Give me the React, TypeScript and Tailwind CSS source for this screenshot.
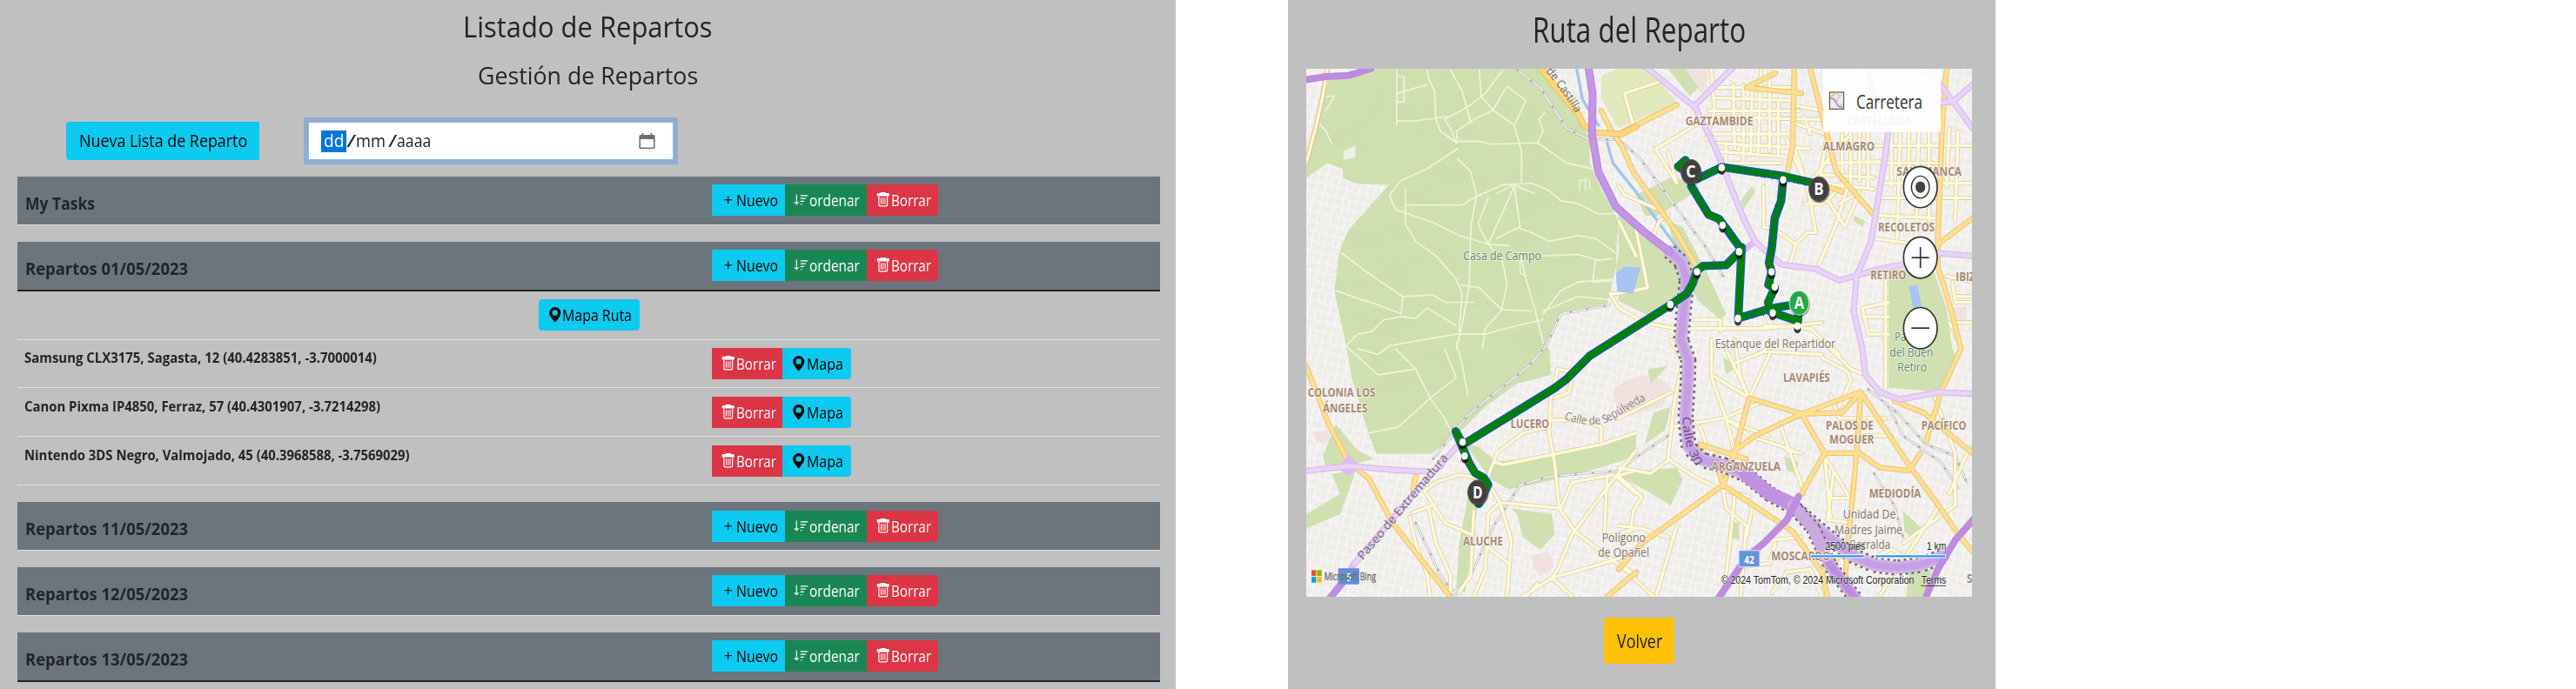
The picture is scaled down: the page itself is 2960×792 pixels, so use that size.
import React, { useLayoutEffect, useRef, useState } from "react";
import { BsGeoAltFill, BsPlus, BsSortDown } from "react-icons/bs";

/** Single line of text condensed or widened to a given width. */
function Fit({ w, children }: { w: number; children: string }) {
  const ref = useRef<HTMLSpanElement>(null);
  const [scale, setScale] = useState(1);
  useLayoutEffect(() => {
    if (ref.current) setScale(w / ref.current.offsetWidth);
  }, [w]);
  return (
    <span className="inline-block text-left" style={{ width: w }}>
      <span ref={ref} className="inline-block origin-left whitespace-nowrap" style={{ transform: `scaleX(${scale})` }}>
        {children}
      </span>
    </span>
  );
}

function TrashIcon() {
  return (
    <svg viewBox="0 0 16 16" className="size-[17.5px] shrink-0" fill="currentColor">
      <path d="M6 0h4a1 1 0 0 1 1 1h2.5a1 1 0 0 1 1 1v1.4a.6.6 0 0 1-.6.6H2.1a.6.6 0 0 1-.6-.6V2a1 1 0 0 1 1-1H5a1 1 0 0 1 1-1z" />
      <path d="M3 4v9.2a1.8 1.8 0 0 0 1.8 1.8h6.4a1.8 1.8 0 0 0 1.8-1.8V4h-1.1v9.1a.9.9 0 0 1-.9.9H5a.9.9 0 0 1-.9-.9V4z" />
      <path d="M5.4 5.6h.95v7H5.4zM7.5 5.6h.95v7H7.5zM9.6 5.6h.95v7H9.6z" />
    </svg>
  );
}

const smallBtn = "flex h-9 items-center pl-[10px] text-[17.5px] leading-[26px]";

function ListButtons() {
  return (
    <div className="flex">
      <button className={`${smallBtn} w-[84px] bg-[#0dcaf0] text-black`}>
        <BsPlus className="size-[17.5px] shrink-0" />
        <Fit w={48}>Nuevo</Fit>
      </button>
      <button className={`${smallBtn} w-[94px] bg-[#198754] text-white`}>
        <BsSortDown className="size-[17.5px] shrink-0" />
        <Fit w={58}>ordenar</Fit>
      </button>
      <button className={`${smallBtn} w-[82px] rounded-r bg-[#dc3545] text-white`}>
        <TrashIcon />
        <Fit w={46}>Borrar</Fit>
      </button>
    </div>
  );
}

function ListHeader({ name, w, open, offset }: { name: string; w: number; open?: boolean; offset?: boolean }) {
  return (
    <div
      className={`flex items-start bg-[#6c757d] ${
        open ? "h-[57px] border-b-2 border-[#212529]" : "h-14 border-b border-[#dee2e6]"
      }`}
    >
      <h4 className="w-[798px] pt-[19px] pl-[9px] text-[19.5px] leading-6 font-bold">
        <Fit w={w}>{name}</Fit>
      </h4>
      <div className={offset ? "pt-[10px]" : "pt-[9px]"}>
        <ListButtons />
      </div>
    </div>
  );
}

const deliveries = [
  { name: "Samsung CLX3175, Sagasta, 12 (40.4283851, -3.7000014)", w: 405, cls: "h-[55px] pt-[9px]" },
  { name: "Canon Pixma IP4850, Ferraz, 57 (40.4301907, -3.7214298)", w: 409, cls: "h-14 pt-[10px]" },
  { name: "Nintendo 3DS Negro, Valmojado, 45 (40.3968588, -3.7569029)", w: 443, cls: "h-14 pt-[10px]" },
];

function DeliveryRow({ name, w, cls }: { name: string; w: number; cls: string }) {
  return (
    <div className={`flex items-start border-b border-[#dee2e6] ${cls}`}>
      <div className="w-[798px] pt-px pl-[8px] text-[16px] leading-5 font-bold">
        <Fit w={w}>{name}</Fit>
      </div>
      <button className={`${smallBtn} w-[81px] bg-[#dc3545] text-white`}>
        <TrashIcon />
        <Fit w={46}>Borrar</Fit>
      </button>
      <button className={`${smallBtn} w-[79px] rounded-r bg-[#0dcaf0] text-black`}>
        <BsGeoAltFill className="size-[17.5px] shrink-0" />
        <Fit w={42}>Mapa</Fit>
      </button>
    </div>
  );
}

function CalendarIcon() {
  return (
    <svg viewBox="0 0 19 18" className="h-[18px] w-[19px]">
      <path d="M2 2h15a1.6 1.6 0 0 1 1.6 1.6v12.8A1.6 1.6 0 0 1 17 18H2a1.6 1.6 0 0 1-1.600-1.600V3.600A1.600 1.600 0 0 1 2 2zM2 7v9.600h15V7z" fill="#6d6f71" fillRule="evenodd" />
      <path d="M3.600 0h1.800v3H3.600zM13.600 0h1.800v3h-1.800z" fill="#6d6f71" />
    </svg>
  );
}

function ListPanel() {
  return (
    <section className="h-[792px] w-[1351px] shrink-0 bg-[#c0c0c0] pt-[11px] pr-[18px] pl-5">
      <h1 className="h-10 pr-[2px] text-center text-[33px] leading-10">
        <Fit w={287}>Listado de Repartos</Fit>
      </h1>
      <h3 className="mt-[18px] h-[34px] pr-[2px] text-center text-[28px] leading-[34px]">
        <Fit w={253}>Gestión de Repartos</Fit>
      </h3>
      <div className="mt-[37px] flex h-11 pl-14 text-[20px] leading-[30px]">
        <button className="w-[222px] rounded-l bg-[#0dcaf0] pl-[15px] text-left text-black">
          <Fit w={193}>Nueva Lista de Reparto</Fit>
        </button>
        <div className="ml-14 flex w-[420px] items-center border border-[#86b7fe] bg-white pl-[14px] ring-[5px] ring-[#0d6efd]/25">
          <span className="flex h-[25px] w-[29px] items-center justify-center bg-[#0078d7] text-white">
            <Fit w={23}>dd</Fit>
          </span>
          <Fit w={11}>/</Fit>
          <Fit w={34}>mm</Fit>
          <span className="w-[3px]" />
          <Fit w={10}>/</Fit>
          <Fit w={39}>aaaa</Fit>
          <span className="mr-5 ml-auto pb-px">
            <CalendarIcon />
          </span>
        </div>
      </div>
      <div className="mt-[19px] flex flex-col gap-[19px]">
        <ListHeader name="My Tasks" w={80} />
        <div>
          <ListHeader name="Repartos 01/05/2023" w={187} open />
          <div className="flex h-14 justify-center border-b border-[#dee2e6] pt-[9px]">
            <button className={`${smallBtn} w-[116px] rounded bg-[#0dcaf0] text-black`}>
              <BsGeoAltFill className="size-[17.5px] shrink-0" />
              <Fit w={80}>Mapa Ruta</Fit>
            </button>
          </div>
          {deliveries.map((d) => (
            <DeliveryRow key={d.name} {...d} />
          ))}
        </div>
        <ListHeader name="Repartos 11/05/2023" w={187} offset />
        <ListHeader name="Repartos 12/05/2023" w={187} />
        <ListHeader name="Repartos 13/05/2023" w={187} open />
      </div>
    </section>
  );
}

const greens = [
  "M345 235L270 262L200 270L160 440L123 560V612L195 560L248 580L250 612Q300 640 340 632L408 635L340 710L270 790Q240 850 235 880L220 1000L262 1200L280 1300L340 1500L365 1562H555L640 1500L740 1400L850 1320L968 1290L960 1200L945 1190L1000 1075L1160 1045L1190 920L1200 870V760L1140 650L1100 560V480L1060 390L940 235Z",
  "M1260 670L1380 610L1460 620L1480 650L1330 745L1290 740Z",
  "M1370 235H1430L1475 300L1445 330Z",
  "M1370 760L1420 780L1500 930L1570 1080L1550 1100L1470 1030L1400 880Z",
  "M1200 730L1290 820L1370 860L1450 940V1020L1370 1060L1300 1085L1200 1035L1190 900Z",
  "M2130 930L2280 915L2330 1060L2350 1200L2370 1240L2310 1350L2130 1335L2130 1190Z",
  "M1200 1640L1290 1620L1400 1610L1420 1650L1380 1740L1280 1680Z",
  "M2180 1760L2245 1820L2215 1850L2185 1830Z",
  "M2200 1970L2280 1960L2255 2060H2190Z",
  "M1560 1230L1610 1260L1570 1290Z",
  "M1300 1270L1370 1260L1310 1320Z",
  "M1320 1420L1380 1400L1360 1480L1290 1530Z",
  "M1200 1510L1260 1490L1200 1590Z",
  "M1580 1800H1615V1860L1580 1850Z",
  "M225 1460L300 1550L355 1580L310 1592L190 1610L180 1570Z",
  "M123 1770L240 1700L210 1630L270 1625L290 1632L240 1770L123 1820Z",
  "M660 1520L720 1540L780 1590L1000 1560L1260 1490V1570L1120 1615L900 1670L820 1685L760 1650L700 1570Z",
  "M830 1750L970 1770L980 1840L930 1892L870 1850L850 1770Z",
  "M680 1710L650 1870L640 2030L670 2040L700 1850L715 1730Z",
  "M1620 690L1660 640L1670 660L1630 720Z",
  "M2010 740L2050 760L2040 780L2010 760Z",
  "M2240 240L2290 235L2240 270Z",
  "M1770 1570L1820 1590L1810 1630L1780 1620Z",
];

const parkPaths = [
  "M435 235V430M435 262H460V350H435M435 320L540 290M435 415H500L610 400M540 240L545 270L565 310L570 410L585 450L640 490L620 440L600 410L690 360L740 320L800 240",
  "M620 240L660 310L690 420M720 240L725 330L770 380L840 430L865 520V625M840 430L880 345L815 295L765 380L700 410L640 450L645 490M650 485H720L760 495L920 490L1020 560L1110 580",
  "M920 490L940 450L925 410L945 385M645 510L540 580L450 620L410 670L430 720L560 765L650 810L750 840L820 845",
  "M645 545L690 590L710 670L690 780L685 980L660 1120L640 1200M465 650V770L500 830L570 880L640 960L660 1010L650 1140",
  "M465 705H660L700 680L800 635L900 630L960 655L1000 690L1060 700L1130 735L1190 735M840 640L750 840L715 770L750 680M840 640L860 780L780 820M860 785L900 800L960 830L1060 810L1120 820L1190 870",
  "M750 840L800 900L815 980L795 1070L740 1130L730 1200M860 870L880 960L910 1060L940 1180M940 880L1060 875L1130 895L1180 890M1120 895L1110 970L1180 965",
  "M245 870L330 935L455 1020L560 1015L600 1040L700 1040M655 980L720 990L795 1065L900 1070M225 1000L310 1030L360 1045L450 1080L455 1025M455 1090L500 1095L540 1060L640 1120M450 1090L390 1100L350 1140L300 1150L260 1190",
  "M300 1200L370 1220L410 1190L520 1170L640 1150L740 1150L810 1130L940 1100M260 1190L370 1290L500 1270L550 1370L440 1470L340 1490M550 1370L640 1300L600 1200M550 1370L600 1440L630 1500M500 1270L430 1200M680 1360L660 1250L640 1180",
  "M940 1080L1000 1000L1060 970L1180 960M940 1070L1060 1020L1160 1030M165 420L190 450L210 490M190 330H220L190 380",
];

const cream = [
  "M1370 735L1220 670L1200 640M1220 320L1340 280M1220 320L1250 430L1200 460M1330 510L1480 420M1325 510L1400 630L1370 520",
  "M1540 300H1810M1530 335L1800 345M1510 380H1820M1500 400L1900 410M1530 460H1800M1520 490L1860 510M1540 520L1800 540M1520 240L1530 380L1500 480",
  "M1595 290L1600 510M1630 290V560M1660 290L1655 530M1690 240L1680 530M1720 240V520M1750 350V530M1780 480L1830 600L1860 640M1840 400L1860 460M1570 500V560L1760 560",
  "M1800 360L1900 380L2000 350M1800 420L1910 460M1700 640V780L1740 790L1810 840L1850 800L1880 800L1850 640L1800 490M1850 640L1920 550L2000 460M1810 840L1790 910",
  "M1970 460V640M2000 450V640M2030 450V620M2060 440V640M1900 510L2100 500M1900 560L2100 555M1900 600L2080 610M1900 630L2080 650",
  "M2140 450V640M2170 460L2160 820M2200 450V620M2235 440L2225 820M2270 450V760M2340 440L2330 640M2370 450L2360 760M2100 500H2420M2100 560H2300M2100 630H2420M2090 680H2420M2080 740L2300 750M2080 820L2300 850",
  "M1920 450L1890 640L1980 780L2030 660L1960 700M1990 640L1950 770L1890 910M1840 700L1900 700L1950 660",
  "M1260 790L1300 990L1200 1010L1170 1010M1170 1010L1200 1060L1290 1110L1440 1140M1200 760L1260 880M1320 810L1340 760L1370 740",
  "M1440 1130H1700L1900 1110M1460 1100H1550V1140M1700 1120L1860 1130L1960 1220M2040 1060L2130 1040M2040 1090L2130 1090M2040 1060L2060 1150L2130 1150M2120 950V1340",
  "M2330 950L2420 970M2360 1020H2420M2350 970L2360 1040L2420 1040M2380 1190L2340 1110L2420 1110",
  "M1200 1440L1280 1400L1380 1350M1380 1170L1420 1240L1390 1400L1370 1580L1460 1640L1560 1690M1200 1610L1310 1630L1370 1585M1380 1470L1560 1440L1680 1390M1520 1170V1290L1650 1370M1560 1180L1650 1370M1520 1300L1570 1440L1600 1560M1600 1170L1620 1300L1650 1370",
  "M1600 1250L1700 1210L1900 1220M1700 1210L1720 1180M1650 1370L1720 1220M1570 1440L1650 1500L1800 1550M1560 1440L1660 1480L1720 1500M1760 1470L1840 1700M1780 1550L1830 1560M1840 1430L1800 1440",
  "M1900 1170L2000 1270L2050 1290M1900 1230L1990 1280L2000 1310L1960 1400M1930 1360L1960 1440L2050 1440M1910 1570L1930 1780M1910 1570L2000 1720M1930 1715H2005M1940 1630L1920 1790L2000 1800M2010 1500L2140 1500M2060 1440H2120",
  "M1480 1470L1500 1520L1460 1570M1560 1690L1570 1750L1640 1810L1620 2055M1600 1700L1580 1900L1560 2055M1640 1720L1660 1750L1640 1850M1570 1690L1650 1710M1400 1810L1330 2050M1200 1940L1320 2055M1630 1910L1720 1860L1830 1850M1640 1950L1720 1940L1740 1870",
  "M1730 2040L1780 1970L1860 1960M1860 1960L1900 2050M2100 2050L2300 1750M2020 1950L2140 1890L2200 1930M2180 1870L2360 1740M2360 1740V1560L2290 1370M2410 1540L2340 1700M1200 1810L1280 1820L1370 1850M1240 1830L1250 1760L1280 1710L1200 1640",
  "M990 1270L965 1380L960 1490L980 1600L995 1750L1050 1830L1180 1930L1260 1980M965 1445L1080 1450L1140 1470L1140 1520M990 1270L1040 1280L1030 1350L980 1370M1260 1490L1140 1530L800 1600L770 1590M960 1470L870 1490L780 1560L750 1640",
  "M1260 1550L1190 1640L1040 1840L990 1960L970 1990L870 2055M970 1990L1180 1930L1260 1900M1190 1640L1260 1620M1190 1640L1260 1700M790 1730L1000 1750L1040 1660L1180 1635M790 1730L750 1660L690 1640L650 1635L570 1660L530 1690",
  "M790 1730L830 1860L815 2055M785 1735L750 1770L745 1880L740 1960L700 2055M700 1760L690 1980L650 2040M530 1690L600 1800L690 1840M545 1750L570 1870L620 1980V2040M480 1780L500 1870L540 1980L550 2055M490 1765L570 1735M745 1880L820 1940M970 1990L1040 2055M1160 1640L1150 1850L1260 1820M920 2010L880 2055",
];

const yellow = [
  "M1200 460L1400 360",
  "M1640 300L1740 250M1640 300L1830 320M1805 235L1800 500L1780 600M1860 235L1900 390L1950 590L2080 740",
  "M2330 235L2315 440L2300 820L2300 920L2330 1010L2380 1200L2310 1350L2260 1520",
  "M2300 840L2420 750M1890 630L1970 660",
  "M1650 1370L1600 1560L1560 1670M1650 1370L1830 1425L2030 1350M1830 1425L1670 1500L1590 1560M1830 1425L1910 1560L1830 1700",
  "M2035 1350L2200 1600L2310 1750L2370 1840M2035 1350L2020 1560L1990 1880L1980 2000M2035 1350L1970 1420L1830 1425",
  "M1910 1560H2030L2100 1610L2200 1620L2240 1560M2150 1380L2250 1420L2420 1560M1490 1570L1480 1530L1640 1580M1530 1570L1560 1670L1280 1870L1200 1960",
  "M1560 1670L1800 1830L1900 1970L1920 2055M1900 1970L1990 1890",
  "M123 1260L200 1460L270 1590L340 1650L420 1800L620 2055M1260 1970L1160 2055M500 1640L490 1690",
  "M1140 380L1170 440L1210 500L1250 590L1400 800L1470 920",
  "M2370 1840L2420 1900",
];

const railways = "M1200 480L1270 540L1500 850L1560 950M2060 1340L2160 1420L2260 1530L2360 1570L2400 1660M2130 1400L2180 1500L2310 1590L2370 1680M2080 1630L2150 1740L2180 1850M500 1800L590 1990L640 2050M620 2050L680 2000L770 1810L860 1670L960 1640L1200 1620L1280 1560L1370 1500M850 240L930 300L1020 440L1090 475L1200 480M560 1580L680 1430L740 1380L890 1260L950 1190L1000 1080L1170 1050";

const m30a = "M1095 225L1110 320L1108 460L1130 590L1190 710L1290 800L1375 865";
const m30b = "M1375 865L1415 900L1435 960L1425 1060L1415 1170L1440 1240L1438 1320L1430 1440L1442 1540L1490 1585L1560 1600L1640 1635L1720 1700L1800 1745L1900 1830L2000 1910L2080 1945L2160 1955L2240 1945L2320 1915";
const route = "M718 1735L750 1668L735 1645L705 1628L685 1595L668 1555L638 1485L664 1530L980 1335L1020 1305L1100 1225L1378 1049L1435 1010L1455 975L1470 930L1490 915L1570 912L1612 870L1624 850L1612 1095L1720 1062L1820 1045L1818 1105L1722 1072L1715 1040L1738 990L1716 980L1727 935L1718 905L1728 850L1738 750L1760 690L1767 612";
const route2 = "M1885 632L1767 605L1555 574L1470 615L1405 572L1430 550M1450 640L1510 738L1545 752L1570 785L1624 860";
const hatchA = "M1560 574L1885 634M1475 612L1550 575M1765 650L1738 750L1718 905M1640 1090L1800 1048M1450 640L1505 730M1490 915L1570 912M1570 785L1618 850";

const stops = [
  [1555, 576], [1767, 618], [1558, 775], [1615, 866], [1470, 935], [1378, 1048], [1611, 1096],
  [1731, 1077], [1727, 935], [1738, 987], [1816, 1122], [662, 1522], [669, 1570],
];

const pins = [
  { t: "A", x: 1822, y: 1042, c: "#22ab4b" },
  { t: "B", x: 1890, y: 650, c: "#404040" },
  { t: "C", x: 1449, y: 590, c: "#404040" },
  { t: "D", x: 714, y: 1695, c: "#404040" },
];

const districts: [string, number, number, number][] = [
  ["GAZTAMBIDE", 1430, 430, 233], ["CASTELLANA", 1987, 430, 222], ["ALMAGRO", 1904, 518, 178],
  ["SALAMANCA", 2158, 603, 224], ["RECOLETOS", 2094, 795, 195], ["RETIRO", 2068, 961, 123],
  ["IBIZA", 2362, 968, 90], ["COLONIA LOS", 128, 1366, 233], ["ÁNGELES", 180, 1418, 154],
  ["LUCERO", 827, 1473, 134], ["ALUCHE", 664, 1878, 137], ["LAVAPIÉS", 1767, 1314, 161],
  ["PALOS DE", 1914, 1480, 164], ["MOGUER", 1926, 1528, 154], ["PACÍFICO", 2243, 1480, 155],
  ["ARGANZUELA", 1520, 1620, 238], ["MEDIODÍA", 2063, 1713, 179], ["MOSCARDÓ", 1726, 1930, 204],
  ["SAN DIEGO", 2400, 2006, 190],
];

const places: [string, number, number, number, string][] = [
  ["Casa de Campo", 664, 895, 269, "#5d8566"],
  ["Estanque del Repartidor", 1532, 1197, 415, "#84746c"],
  ["Parque", 2152, 1174, 110, "#5d8566"],
  ["del Buen", 2134, 1226, 150, "#5d8566"],
  ["Retiro", 2161, 1278, 101, "#5d8566"],
  ["Unidad De", 1973, 1786, 182, "#84746c"],
  ["Madres Jaime", 1944, 1838, 234, "#84746c"],
  ["Garralda", 1993, 1890, 144, "#84746c"],
  ["Polígono", 1142, 1867, 151, "#84746c"],
  ["de Opañel", 1129, 1918, 176, "#84746c"],
];

function RouteMap() {
  const all = (list: string[]) => list.join("");
  return (
    <svg viewBox="123 235 2295 1820" preserveAspectRatio="none" className="block h-[607px] w-[765px]" fontFamily="'Open Sans', 'Noto Sans', sans-serif">
      <defs>
        <pattern id="blocks" width="74" height="66" patternUnits="userSpaceOnUse" patternTransform="rotate(14)">
          <path d="M0 8H74M0 40H40L74 48M12 0V66M38 0L44 66M62 8V48" stroke="#fff" strokeWidth="3" fill="none" opacity=".75" />
        </pattern>
        <filter id="relief" x="0" y="0" width="1" height="1">
          <feTurbulence type="fractalNoise" baseFrequency="0.006 0.014" numOctaves="3" seed="8" />
          <feColorMatrix values="0 0 0 0 .55  0 0 0 0 .65  0 0 0 0 .4  1.6 0 0 0 -.72" />
        </filter>
        <clipPath id="casa"><path d={greens[0]} /></clipPath>
        <path id="paseo" d="M318 1930L640 1545" />
        <path id="castilla" d="M948 244Q1020 330 1056 398" />
        <path id="calle30" d="M1420 1434Q1422 1540 1470 1610" />
        <path id="sepulveda" d="M1012 1443Q1100 1475 1165 1452Q1230 1410 1298 1376" />
      </defs>
      <rect x="123" y="235" width="2295" height="1820" fill="#f0eeeb" />
      <rect x="123" y="235" width="2295" height="1820" fill="url(#blocks)" />
      <path d="M1180 1340Q1300 1250 1380 1330L1350 1400L1200 1440ZM1430 235H1510L1500 330L1450 290ZM900 1910L960 1900L980 1950L930 1985L905 1950ZM145 1490L200 1480L205 1520L160 1525ZM2350 1060L2400 1050L2395 1120L2360 1120Z" fill="#f2dcd9" opacity=".75" />
      <path d="M1200 235H1300L1400 350L1320 390L1220 430L1200 440L1140 340V260Z" fill="#e2e9bd" />
      <path d={all(greens)} fill="#d0e0b0" />
      <g clipPath="url(#casa)">
        <rect x="123" y="235" width="1100" height="1400" filter="url(#relief)" opacity=".35" />
      </g>
      <path d="M250 518L292 500V540L252 550Z" fill="#f0eeeb" />
      <g fill="none" strokeLinejoin="round" strokeLinecap="round">
        <path d={all(parkPaths)} stroke="#eff5da" strokeWidth="5" />
        <path d="M1065 655V620H1100V650M1085 655V610M780 665L840 635L910 665M850 640L880 655M860 870V940L880 950" stroke="#eff5da" strokeWidth="4" />
        <path d="M1160 490L1180 560L1260 660L1400 850L1440 900M1055 235L1075 340L1130 430" stroke="#a5c5ea" strokeWidth="10" />
        <path d={railways} stroke="#bab8bb" strokeWidth="9" />
        <path d={railways} stroke="#f2f1f2" strokeWidth="5" />
        <path d={railways} stroke="#aaa8ac" strokeWidth="5" strokeDasharray="4 55" />
        <path d={all(cream)} stroke="#dccfa5" strokeWidth="15" />
        <path d={all(cream)} stroke="#fff9da" strokeWidth="10" />
        <path d={all(yellow)} stroke="#e9c083" strokeWidth="19" />
        <path d={all(yellow)} stroke="#fee08d" strokeWidth="13" />
        <path d="M195 235L180 330L155 440L123 560" stroke="#dfba80" strokeWidth="17" />
        <path d="M195 235L180 330L155 440L123 560" stroke="#fff5cf" strokeWidth="11" />
        <path d="M925 225L1000 320L1060 390L1080 430L1120 455L1210 460L1260 435" stroke="#e9b966" strokeWidth="22" />
        <path d="M925 225L1000 320L1060 390L1080 430L1120 455L1210 460L1260 435" stroke="#ffd77a" strokeWidth="17" />
        <g stroke="#dcbcf1" strokeWidth="22">
          <path d="M1295 230L1465 370L1530 500L1630 750L1670 830L1760 910L1880 925L1960 965L2030 945L2100 925L2180 910M1465 360L1600 225M1670 830L1620 870" />
          <path d="M2130 450L2115 560L2070 830L2020 950L2010 1070L2040 1200L2050 1290L2100 1350L2170 1375L2300 1350L2420 1355M2060 240L2100 440" />
          <path d="M2270 240L2350 345L2420 440M2310 350H2350L2420 290M2300 870L2420 880" />
          <path d="M110 1622L270 1605L430 1618L560 1625L590 1600M640 1540L520 1670L290 1940L200 2065M270 1580L245 1610L270 1625L300 1608Z" />
        </g>
        <g stroke="#e8d4f7" strokeWidth="14">
          <path d="M1295 230L1465 370L1530 500L1630 750L1670 830L1760 910L1880 925L1960 965L2030 945L2100 925L2180 910M1465 360L1600 225" />
          <path d="M2130 450L2115 560L2070 830L2020 950L2010 1070L2040 1200L2050 1290L2100 1350L2170 1375L2300 1350L2420 1355" />
          <path d="M2270 240L2350 345L2420 440M2310 350H2350L2420 290M2300 870L2420 880" />
          <path d="M110 1622L270 1605L430 1618L560 1625M640 1540L520 1670L290 1940" />
        </g>
        <path d={m30b} stroke="#73637f" strokeWidth="56" strokeLinecap="butt" strokeDasharray="9 12" />
        <path d={m30b} stroke="#cdb6dc" strokeWidth="42" />
        <path d={m30b} stroke="#c79ee6" strokeWidth="24" />
        <path d="M1640 1635L1720 1700L1800 1735" stroke="#bf93df" strokeWidth="48" />
        <path d={m30a} stroke="#b184d2" strokeWidth="27" />
        <path d={m30a} stroke="#c594e6" strokeWidth="21" />
        <path d="M1800 1740L1870 1820L1930 1950L2020 2065" stroke="#73637f" strokeWidth="52" strokeLinecap="butt" strokeDasharray="9 12" />
        <path d="M1800 1740L1870 1820L1930 1950L2020 2065" stroke="#c9a9e0" strokeWidth="40" />
        <g stroke="#bd8ce0" strokeWidth="24">
          <path d="M110 275L190 262L270 258L345 235M1540 2065L1640 1920L1700 1870L1780 1790L1820 1710M1925 1940L2020 2065M2255 2065L2300 1960L2360 1860L2430 1780M250 2005L200 2065" />
        </g>
      </g>
      <path d="M1190 940L1220 917L1275 920L1250 1010L1195 1003ZM2200 985L2230 980L2245 1060H2215Z" fill="#a6c4f4" />

      <g fontWeight="700" fontSize="43" fill="#a88a75" stroke="#f7f4f0" strokeWidth="5" paintOrder="stroke">
        {districts.map(([t, x, y, w]) => (
          <text key={t} x={x} y={y} textLength={w} lengthAdjust="spacingAndGlyphs">{t}</text>
        ))}
      </g>
      <g fontSize="44" stroke="#f5f4ee" strokeWidth="5" paintOrder="stroke">
        {places.map(([t, x, y, w, c]) => (
          <text key={t} x={x} y={y} fill={c} textLength={w} lengthAdjust="spacingAndGlyphs">{t}</text>
        ))}
      </g>
      <g fontSize="40" fill="#75696e">
        <text fontSize="41" textLength="460" lengthAdjust="spacingAndGlyphs"><textPath href="#paseo">Paseo de Extremadura</textPath></text>
        <text textLength="178" lengthAdjust="spacingAndGlyphs"><textPath href="#castilla">de Castilla</textPath></text>
        <text textLength="180" lengthAdjust="spacingAndGlyphs" fill="#6b4b86"><textPath href="#calle30">Calle 30</textPath></text>
        <text textLength="306" lengthAdjust="spacingAndGlyphs" fill="#8b8480"><textPath href="#sepulveda">Calle de Sepúlveda</textPath></text>
      </g>

      <g fill="none" strokeLinejoin="round" strokeLinecap="round">
        <path d={route + route2} stroke="#1c56d6" strokeWidth="29" />
        <path d={route + route2} stroke="#008000" strokeWidth="22" />
        <path d={hatchA} stroke="#1450b0" strokeWidth="24" strokeLinecap="butt" strokeDasharray="2.500 17 2.500 9 2.500 24" />
      </g>
      {stops.map(([x, y]) => (
        <g key={`${x}-${y}`}>
          <ellipse cx={x} cy={y + 10} rx="12" ry="15" fill="#000" opacity=".75" />
          <ellipse cx={x} cy={y} rx="11" ry="13" fill="#fff" />
        </g>
      ))}
      {pins.map((p) => (
        <g key={p.t}>
          <ellipse cx={p.x + 2} cy={p.y + 5} rx="36" ry="43" fill="#000" opacity=".35" />
          <ellipse cx={p.x} cy={p.y} rx="34" ry="42" fill={p.c} stroke={p.t === "A" ? "#d9f0df" : "#585858"} strokeWidth="3" />
          <text x={p.x - 17} y={p.y + 20} fontSize="56" fontWeight="700" fill="#fff" textLength="34" lengthAdjust="spacingAndGlyphs">{p.t}</text>
        </g>
      ))}

      <rect x="1905" y="235" width="405" height="218" fill="#fff" opacity=".91" />
      <rect x="1927" y="316" width="49" height="58" fill="#ece9e6" stroke="#3c3c3c" strokeWidth="3" />
      <path d="M1950 318L1935 330M1955 374L1975 350M1950 350L1960 330L1975 322M1960 330L1950 318" stroke="#c9c5c0" strokeWidth="3" fill="none" />
      <path d="M1929 333Q1938 328 1946 318" stroke="#f6be60" strokeWidth="5" fill="none" />
      <path d="M1929 337Q1945 337 1950 352T1975 369" stroke="#b98ad8" strokeWidth="6" fill="none" />
      <text x="2019" y="372" fontSize="65" fill="#333" textLength="228" lengthAdjust="spacingAndGlyphs">Carretera</text>

      <g fill="#fff" stroke="#333" strokeWidth="5">
        <ellipse cx="2240" cy="643" rx="58" ry="71" />
        <ellipse cx="2240" cy="886" rx="58" ry="71" />
        <ellipse cx="2240" cy="1129" rx="58" ry="71" />
        <ellipse cx="2240" cy="643" rx="31" ry="38" strokeWidth="4" />
        <path d="M2210 886H2270M2240 850V922M2209 1129H2271" />
      </g>
      <ellipse cx="2240" cy="643" rx="17" ry="20" fill="#444" />

      <rect x="233" y="1957" width="73" height="55" rx="4" fill="#638fd8" />
      <text x="261" y="2001" fontSize="38" fontWeight="700" fill="#fff" textLength="17" lengthAdjust="spacingAndGlyphs">5</text>
      <rect x="1614" y="1895" width="72" height="57" rx="3" fill="#6693dc" stroke="#dce8fa" strokeWidth="3" />
      <text x="1633" y="1941" fontSize="38" fontWeight="700" fill="#fff" textLength="34" lengthAdjust="spacingAndGlyphs">42</text>
      <path d="M141 1963H157V1983H141Z" fill="#f25022" />
      <path d="M160 1963H176V1983H160Z" fill="#7fba00" />
      <path d="M141 1986H157V2006H141Z" fill="#00a4ef" />
      <path d="M160 1986H176V2006H160Z" fill="#ffb900" />
      <text x="185" y="1998" fontSize="36" fill="#6b6b6b" stroke="#6b6b6b" textLength="178" lengthAdjust="spacingAndGlyphs">Microsoft Bing</text>

      <g fontFamily="'Liberation Sans', Arial, sans-serif" fontSize="36" fill="#222">
        <g stroke="#fff" strokeWidth="3" strokeOpacity=".7" paintOrder="stroke">
          <text x="1912" y="1893" textLength="138" lengthAdjust="spacingAndGlyphs">2500 pies</text>
          <text x="2262" y="1893" textLength="67" lengthAdjust="spacingAndGlyphs">1 km</text>
          <text x="1553" y="2011" textLength="665" lengthAdjust="spacingAndGlyphs">© 2024 TomTom, © 2024 Microsoft Corporation</text>
          <text x="2243" y="2011" textLength="86" lengthAdjust="spacingAndGlyphs">Terms</text>
        </g>
        <path d="M2242 2017H2329" stroke="#222" strokeWidth="2.500" />
      </g>
      <path d="M1861 1915H2047M2083 1915H2327" stroke="#fff" strokeWidth="13" />
      <path d="M1863 1915H2045M2085 1915H2325" stroke="#2a93f5" strokeWidth="7" />
    </svg>
  );
}

function MapPanel() {
  return (
    <section className="ml-[129px] flex h-[792px] w-[813px] shrink-0 flex-col items-start bg-[#c0c0c0] pt-[9px] pl-[21px]">
      <h1 className="h-[70px] pl-[260px] text-[40px] leading-[49px]">
        <Fit w={245}>Ruta del Reparto</Fit>
      </h1>
      <RouteMap />
      <button className="mt-6 ml-[342px] h-[53px] w-[81px] rounded bg-[#ffc107] pl-[15px] text-left text-[22px] text-[#1c1c1c]">
        <Fit w={52}>Volver</Fit>
      </button>
    </section>
  );
}

export default function App() {
  return (
    <main className="flex h-[792px] w-[2960px] overflow-hidden bg-white font-['Open_Sans','Noto_Sans',sans-serif] text-[#212529]">
      <ListPanel />
      <MapPanel />
    </main>
  );
}
